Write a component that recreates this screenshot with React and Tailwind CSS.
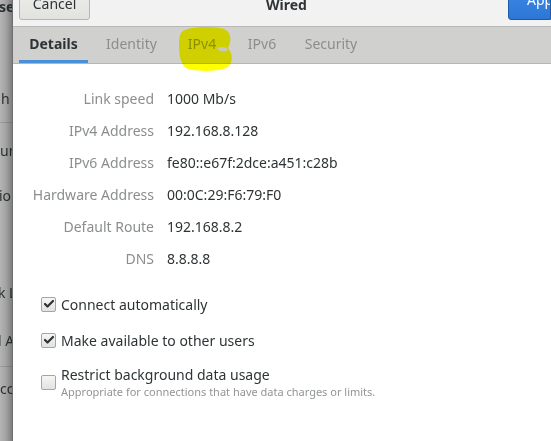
import { Check } from 'lucide-react';

const rows = [
  ['Link speed', '1000 Mb/s'],
  ['IPv4 Address', '192.168.8.128'],
  ['IPv6 Address', 'fe80::e67f:2dce:a451:c28b'],
  ['Hardware Address', '00:0C:29:F6:79:F0'],
  ['Default Route', '192.168.8.2'],
  ['DNS', '8.8.8.8'],
];

const tabs = [
  { name: 'Details', w: 'w-[69px]', active: true },
  { name: 'Identity', w: 'w-[87px]' },
  { name: 'IPv4', w: 'w-[54px]' },
  { name: 'IPv6', w: 'w-[66px]' },
  { name: 'Security', w: 'w-[72px]' },
];

// background window peeking out on the left
const BackWindow = () => (
  <div className="relative w-[12px] shrink-0 overflow-hidden bg-[#b4b4b4] text-[14px] text-[#2e3436] whitespace-nowrap">
    <div className="absolute top-[-4px] left-[-1px] font-bold">se</div>
    <div className="absolute top-[88px] left-[1px]">h</div>
    <div className="absolute top-[122px] left-0 w-full h-px bg-[#9c9c9c]" />
    <div className="absolute top-[140px] left-0">un</div>
    <div className="absolute top-[185px] left-[-1px]">io</div>
    <div className="absolute top-[282px] left-[-2px]">k L</div>
    <div className="absolute top-[330px] left-[-2px]">l A</div>
    <div className="absolute top-[366px] left-0 w-full h-px bg-[#9c9c9c]" />
    <div className="absolute top-[378px] left-0">cc</div>
    <div className="absolute inset-0 bg-gradient-to-r from-black/0 via-black/10 to-black/30" />
  </div>
);

const Box = ({ checked }) => (
  <div className="w-[15px] h-[15px] shrink-0 rounded-[2px] border border-[#a4a6a2] bg-gradient-to-b from-[#f6f6f5] to-[#e2e2e0] flex items-center justify-center">
    {checked && <Check size={12} strokeWidth={4.5} className="text-[#2e3436]" />}
  </div>
);

export default function App() {
  return (
    <div className="flex w-[551px] h-[441px] overflow-hidden bg-white" style={{ fontFamily: '"Noto Sans", sans-serif' }}>
      <BackWindow />
      <div className="relative flex-1 flex flex-col border-l border-[#6f6f6f] min-w-0">
        {/* header bar */}
        <div className="h-[27px] shrink-0 flex items-end bg-[#f2f2f2] border-b border-[#b9b9b7]">
          <div className="ml-[6px] mb-[6px] w-[71px] h-[34px] shrink-0 rounded-[3px] border border-[#b6b6b3] bg-gradient-to-b from-[#eeeeec] to-[#e2e2df] flex items-center justify-center text-[14px] text-[#2e3436]">
            Cancel
          </div>
          <div className="flex-1 self-stretch flex items-center justify-center pr-[25px] -mt-[18px] font-bold text-[14px] text-[#2e3436]">
            Wired
          </div>
          <div className="mb-[6px] w-[43px] h-[34px] shrink-0 rounded-l-[3px] border border-[#1b5aa6] bg-gradient-to-b from-[#3d8ae6] to-[#2d76d6] pl-[18px] pt-[6px] text-[14px] leading-none text-white overflow-hidden whitespace-nowrap">
            Apply
          </div>
        </div>

        {/* tabs */}
        <div className="h-[37px] shrink-0 flex pl-[6px] bg-[#d0d0ce] border-b border-[#b6b6b3]">
          {tabs.map((t) => (
            <div
              key={t.name}
              className={`${t.w} flex items-center justify-center text-[14px] border-b-[3px] ${
                t.active ? 'font-bold text-[#2e3436] border-[#4a90d9]' : 'text-[#8b8e8f] border-transparent'
              }`}
            >
              {t.name}
            </div>
          ))}
        </div>

        {/* highlighter mark */}
        <svg className="absolute left-[165px] top-[26px] mix-blend-multiply pointer-events-none" width="56" height="46" viewBox="0 0 56 46">
          <path
            d="M5 5 C12 0 38 0 46 3 C53 6 54 14 50 22 C55 28 55 36 50 41 C42 46 16 46 8 42 C2 37 1 28 1 18 C1 11 2 7 5 5 Z"
            fill="#ffff00"
          />
          <path d="M39 22 C44 20 49 21 50 24 C46 26 41 26 39 22 Z" fill="#f4f4f4" />
        </svg>

        {/* details */}
        <div className="pt-[18px] grid grid-cols-[141px_1fr] gap-x-[13px] text-[14px]">
          {rows.map(([k, v]) => (
            <div key={k} className="contents">
              <div className="h-[32px] flex items-center justify-end text-[#8b8e8f]">{k}</div>
              <div className="h-[32px] flex items-center text-[#2e3436]">{v}</div>
            </div>
          ))}
        </div>

        <div className="pl-[28px] mt-[21px] flex flex-col text-[14px] text-[#2e3436]">
          <div className="h-[18px] flex items-center gap-[5px]">
            <Box checked />
            <span>Connect automatically</span>
          </div>
          <div className="mt-[18px] h-[18px] flex items-center gap-[5px]">
            <Box checked />
            <span>Make available to other users</span>
          </div>
          <div className="mt-[17px] flex items-center gap-[5px]">
            <Box />
            <div className="flex flex-col">
              <span className="leading-[18px]">Restrict background data usage</span>
              <span className="text-[11px] leading-[15px] text-[#929595]">
                Appropriate for connections that have data charges or limits.
              </span>
            </div>
          </div>
        </div>
      </div>
    </div>
  );
}
